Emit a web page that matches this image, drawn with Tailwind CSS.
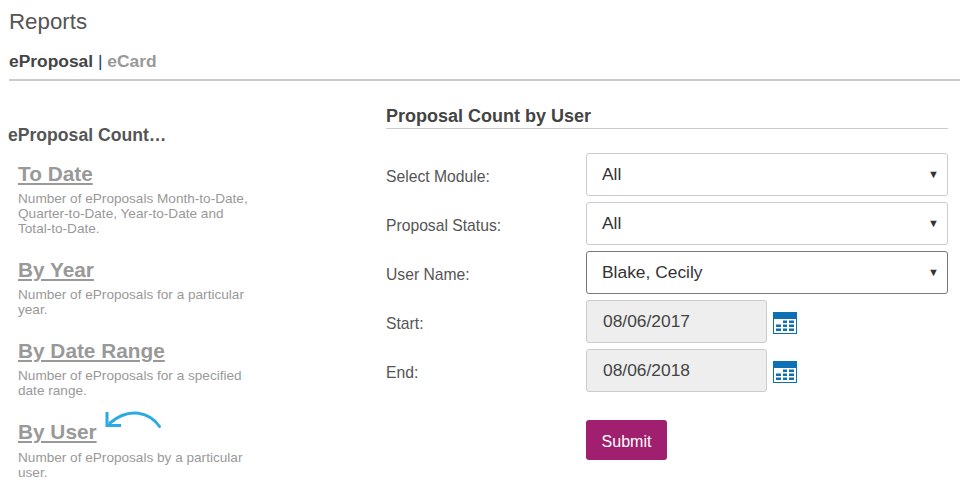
<!DOCTYPE html>
<html lang="en">
<head>
  <meta charset="UTF-8" />
  <title>Reports</title>
  <script src="https://cdn.jsdelivr.net/npm/@tailwindcss/browser@4"></script>
</head>
<body class="bg-white font-['Liberation_Sans',Arial,sans-serif] overflow-hidden">
  <div class="w-[960px] h-[486px] overflow-hidden">
    <!-- Header -->
    <div class="pl-[9px]">
      <h1 class="pt-[8px] text-[22.3px] leading-[27px] text-[#555]">Reports</h1>
      <div class="mt-[16px] pb-[8px] border-b-2 border-[#ccc] text-[17.4px] leading-[20px] font-bold text-[#444]">
        <span>eProposal</span> <span class="font-normal text-[#1f3a7a]">|</span> <a class="text-[#999]">eCard</a>
      </div>
    </div>

    <div class="flex">
      <!-- Left column -->
      <div class="w-[386px] shrink-0 pl-[8px]">
        <h3 class="mt-[44px] text-[17.6px] leading-[20px] font-bold text-[#555]">eProposal Count…</h3>
        <div class="pl-[10px] mt-[16px]">
          <div class="w-[240px]">
            <a class="block text-[20.8px] leading-[26px] font-bold text-[#999] underline">To Date</a>
            <p class="mt-[4px] text-[13.6px] leading-[15px] text-[#999]">Number of eProposals Month-to-Date, Quarter-to-Date, Year-to-Date and Total-to-Date.</p>
          </div>
          <div class="w-[240px] mt-[21px]">
            <a class="block text-[20.8px] leading-[26px] font-bold text-[#999] underline">By Year</a>
            <p class="mt-[4px] text-[13.6px] leading-[15px] text-[#999]">Number of eProposals for a particular year.</p>
          </div>
          <div class="w-[240px] mt-[21px]">
            <a class="block text-[20.8px] leading-[26px] font-bold text-[#999] underline">By Date Range</a>
            <p class="mt-[4px] text-[13.6px] leading-[15px] text-[#999]">Number of eProposals for a specified date range.</p>
          </div>
          <div class="w-[240px] mt-[21px] relative">
            <a class="block text-[20.8px] leading-[26px] font-bold text-[#999] underline">By User</a>
            <svg class="absolute left-[82px] top-[-14px]" width="62" height="26" viewBox="0 0 62 26" fill="none" stroke="#29abe2" stroke-width="3">
              <path d="M59.500 21.500 C50 8 30 1 10 18" stroke-linecap="round" />
              <path d="M7 7 V20.500 H21" />
            </svg>
            <p class="mt-[5px] text-[13.6px] leading-[15px] text-[#999]">Number of eProposals by a particular user.</p>
          </div>
        </div>
      </div>

      <!-- Right column -->
      <div class="w-[562px] shrink-0">
        <h3 class="mt-[24px] border-b border-[#ccc] text-[18px] leading-[23px] font-bold text-[#444]">Proposal Count by User</h3>
        <form class="mt-[24px] flex flex-col gap-[6px]">
          <div class="flex items-center h-[43px]">
            <label class="w-[200px] text-[15.7px] text-[#555] pt-[4px]">Select Module:</label>
            <div class="relative w-[362px]">
              <select class="w-full h-[43px] pl-[15px] appearance-none bg-white border border-[#ccc] rounded-[3px] text-[17.4px] text-[#333]"><option>All</option></select>
              <span class="absolute right-[9px] top-[15px] text-[11px] leading-[12px] text-[#333]">▼</span>
            </div>
          </div>
          <div class="flex items-center h-[43px]">
            <label class="w-[200px] text-[15.7px] text-[#555] pt-[4px]">Proposal Status:</label>
            <div class="relative w-[362px]">
              <select class="w-full h-[43px] pl-[15px] appearance-none bg-white border border-[#ccc] rounded-[3px] text-[17.4px] text-[#333]"><option>All</option></select>
              <span class="absolute right-[9px] top-[15px] text-[11px] leading-[12px] text-[#333]">▼</span>
            </div>
          </div>
          <div class="flex items-center h-[43px]">
            <label class="w-[200px] text-[15.7px] text-[#555] pt-[4px]">User Name:</label>
            <div class="relative w-[362px]">
              <select class="w-full h-[43px] pl-[15px] appearance-none bg-white border border-[#777] rounded-[3px] text-[17.4px] text-[#333]"><option>Blake, Cecily</option></select>
              <span class="absolute right-[9px] top-[15px] text-[11px] leading-[12px] text-[#333]">▼</span>
            </div>
          </div>
          <div class="flex items-center h-[43px]">
            <label class="w-[200px] text-[15.7px] text-[#555] pt-[4px]">Start:</label>
            <input class="w-[181px] h-[43px] pl-[16px] bg-[#eee] border border-[#ccc] rounded-[3px] text-[17.4px] text-[#444]" value="08/06/2017" readonly />
            <svg class="ml-[6px] mt-[2px]" width="24" height="22" viewBox="0 0 24 22">
              <rect width="24" height="22" fill="#0e6fb5" />
              <rect x="1" y="7" width="22" height="14" fill="#fff" />
              <path fill="#0e6fb5" d="M10 8.500h4V11h-4zM16 8.500h5V11h-5zM3 12.500h5V15H3zM10 12.500h4V15h-4zM16 12.500h5V15h-5zM3 16.500h5V19H3zM10 16.500h4V19h-4zM16 16.500h5V19h-5z" />
            </svg>
          </div>
          <div class="flex items-center h-[43px]">
            <label class="w-[200px] text-[15.7px] text-[#555] pt-[4px]">End:</label>
            <input class="w-[181px] h-[43px] pl-[16px] bg-[#eee] border border-[#ccc] rounded-[3px] text-[17.4px] text-[#444]" value="08/06/2018" readonly />
            <svg class="ml-[6px] mt-[2px]" width="24" height="22" viewBox="0 0 24 22">
              <rect width="24" height="22" fill="#0e6fb5" />
              <rect x="1" y="7" width="22" height="14" fill="#fff" />
              <path fill="#0e6fb5" d="M10 8.500h4V11h-4zM16 8.500h5V11h-5zM3 12.500h5V15H3zM10 12.500h4V15h-4zM16 12.500h5V15h-5zM3 16.500h5V19H3zM10 16.500h4V19h-4zM16 16.500h5V19h-5z" />
            </svg>
          </div>
          <div class="pl-[200px] pt-[22px]">
            <button type="button" class="w-[81px] h-[40px] pt-[4px] bg-[#a01f6e] rounded-[3px] text-white text-[16px]">Submit</button>
          </div>
        </form>
      </div>
    </div>
  </div>
</body>
</html>
